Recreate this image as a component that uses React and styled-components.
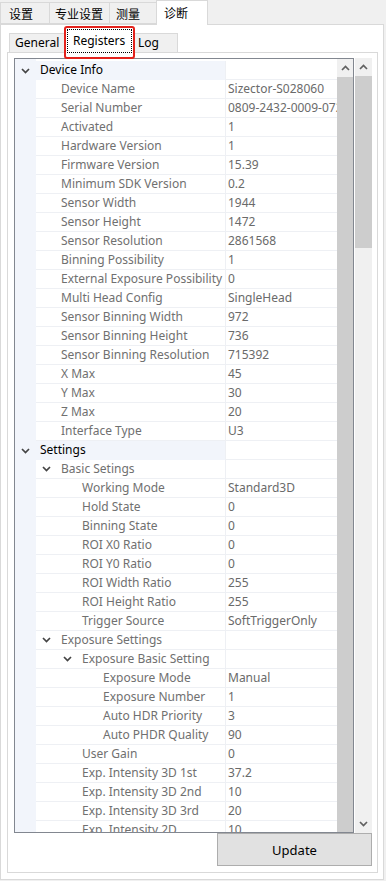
import React from 'react'
import styled, { createGlobalStyle } from 'styled-components'

const GlobalStyle = createGlobalStyle`
  html, body {
    margin: 0;
    padding: 0;
    background: #f0f0f0;
  }
  body {
    font-family: "Noto Sans", "Noto Sans CJK SC", sans-serif;
    font-size: 12px;
    color: #000;
  }
`

const Window = styled.div`
  width: 386px;
  height: 881px;
  display: flex;
  flex-direction: column;
  overflow: hidden;
`

const TabStrip = styled.div`
  display: flex;
  align-items: flex-end;
  height: 24px;
  flex: none;
  position: relative;
  z-index: 1;
`

const OuterTab = styled.div`
  box-sizing: border-box;
  width: ${p => p.w}px;
  height: ${p => (p.active ? 25 : 22)}px;
  margin-left: ${p => (p.first ? 0 : -1)}px;
  margin-bottom: ${p => (p.active ? -1 : 0)}px;
  padding-left: ${p => p.pl}px;
  padding-top: ${p => (p.active ? 3 : 2)}px;
  background: ${p => (p.active ? '#fff' : '#f0f0f0')};
  border: 1px solid #d9d9d9;
  border-bottom: ${p => (p.active ? 'none' : '1px solid #d9d9d9')};
  font-family: "Noto Sans CJK SC", sans-serif;
  font-size: 12px;
  line-height: 17px;
  position: relative;
  z-index: ${p => (p.active ? 2 : 1)};
`

const OuterPanel = styled.div`
  flex: 1;
  margin: 0 2px 1px 0;
  border: 1px solid #d9d9d9;
  background: #fff;
  display: flex;
  flex-direction: column;
  padding: 2px 5px 6px 6px;
  min-height: 0;
`

const InnerStrip = styled.div`
  display: flex;
  align-items: flex-end;
  height: 25px;
  margin-left: 2px;
  flex: none;
  position: relative;
  z-index: 1;
`

const InnerTab = styled.div`
  box-sizing: border-box;
  width: ${p => p.w}px;
  height: ${p => (p.active ? 26 : 19)}px;
  margin-left: ${p => (p.first ? 0 : -1)}px;
  margin-bottom: ${p => (p.active ? -1 : 0)}px;
  padding: ${p => (p.active ? '1px 1px 0' : `0 0 0 ${p.pl}px`)};
  background: ${p => (p.active ? '#fff' : '#f0f0f0')};
  border: 1px solid #d9d9d9;
  border-bottom: none;
  font-size: 12px;
  line-height: 18px;
  display: flex;
  position: relative;
  z-index: ${p => (p.active ? 2 : 1)};
`

const FocusLabel = styled.span`
  flex: 1;
  border: 1px dotted #000;
  padding-left: 5px;
  line-height: 22px;
`

const Highlight = styled.div`
  position: absolute;
  top: -2px;
  left: -2px;
  right: -2px;
  bottom: -6px;
  border: 2px solid #e3221c;
  border-radius: 3px;
  pointer-events: none;
`

const InnerPanel = styled.div`
  flex: 1;
  min-height: 0;
  border: 1px solid #d9d9d9;
  background: #fff;
  display: flex;
  flex-direction: column;
  padding: 5px 5px 6px 6px;
`

const Body = styled.div`
  flex: 1;
  min-height: 0;
  display: flex;
  gap: 1px;
`

const Tree = styled.div`
  flex: 1;
  border: 1px solid #828790;
  display: flex;
  overflow: hidden;
`

const Rows = styled.div`
  flex: 1;
  overflow: hidden;
  padding-top: 2px;
  background: linear-gradient(to right, #f2f5fb 21px, #fff 21px);
`

const Row = styled.div`
  display: flex;
  height: 19px;
`

const Gutter = styled.div`
  width: 21px;
  flex: none;
  display: flex;
  align-items: center;
  justify-content: center;
`

const NameCell = styled.div`
  width: 189px;
  flex: none;
  box-sizing: border-box;
  display: flex;
  align-items: center;
  padding-left: ${p => p.indent}px;
  border-bottom: 1px solid ${p => (p.top ? '#f2f5fb' : '#eef0f4')};
  background: ${p => (p.top ? '#f2f5fb' : 'transparent')};
  color: ${p => (p.top ? '#000' : '#707070')};
  white-space: nowrap;
  overflow: hidden;
`

const Expander = styled.span`
  width: 21px;
  flex: none;
  display: flex;
  align-items: center;
  justify-content: center;
`

const Label = styled.span`
  padding-left: 4px;
  line-height: 18px;
`

const ValueCell = styled.div`
  flex: 1;
  min-width: 0;
  box-sizing: border-box;
  border-left: 1px solid #eef0f4;
  border-bottom: 1px solid #eef0f4;
  padding-left: 2px;
  line-height: 18px;
  color: #6a6a6a;
  white-space: nowrap;
  overflow: hidden;
`

const VScroll = styled.div`
  width: ${p => p.w}px;
  flex: none;
  display: flex;
  flex-direction: column;
  background: #f0f0f0;
`

const Arrow = styled.div`
  height: 18px;
  flex: none;
  display: flex;
  align-items: center;
  justify-content: center;
`

const Thumb = styled.div`
  background: #cdcdcd;
  ${p => (p.h ? `height: ${p.h}px; flex: none;` : 'flex: 1;')}
`

const Track = styled.div`
  flex: 1;
`

const Footer = styled.div`
  display: flex;
  justify-content: flex-end;
  flex: none;
`

const Button = styled.button`
  width: 155px;
  height: 33px;
  background: #e1e1e1;
  border: 1px solid #adadad;
  font-family: "Noto Sans", sans-serif;
  font-size: 13px;
  font-weight: 400;
  color: #000;
  padding: 0;
`

const Chevron = ({ up, color = '#505050' }) => (
  <svg width="9" height="6" viewBox="0 0 9 6">
    <polyline
      points={up ? '1,5 4.5,1.5 8,5' : '1,1 4.5,4.5 8,1'}
      fill="none"
      stroke={color}
      strokeWidth="1.7"
    />
  </svg>
)

const tree = [
  {
    name: 'Device Info',
    children: [
      ['Device Name', 'Sizector-S028060'],
      ['Serial Number', '0809-2432-0009-0727'],
      ['Activated', '1'],
      ['Hardware Version', '1'],
      ['Firmware Version', '15.39'],
      ['Minimum SDK Version', '0.2'],
      ['Sensor Width', '1944'],
      ['Sensor Height', '1472'],
      ['Sensor Resolution', '2861568'],
      ['Binning Possibility', '1'],
      ['External Exposure Possibility', '0'],
      ['Multi Head Config', 'SingleHead'],
      ['Sensor Binning Width', '972'],
      ['Sensor Binning Height', '736'],
      ['Sensor Binning Resolution', '715392'],
      ['X Max', '45'],
      ['Y Max', '30'],
      ['Z Max', '20'],
      ['Interface Type', 'U3'],
    ],
  },
  {
    name: 'Settings',
    children: [
      {
        name: 'Basic Setings',
        children: [
          ['Working Mode', 'Standard3D'],
          ['Hold State', '0'],
          ['Binning State', '0'],
          ['ROI X0 Ratio', '0'],
          ['ROI Y0 Ratio', '0'],
          ['ROI Width Ratio', '255'],
          ['ROI Height Ratio', '255'],
          ['Trigger Source', 'SoftTriggerOnly'],
        ],
      },
      {
        name: 'Exposure Settings',
        children: [
          {
            name: 'Exposure Basic Setting',
            children: [
              ['Exposure Mode', 'Manual'],
              ['Exposure Number', '1'],
              ['Auto HDR Priority', '3'],
              ['Auto PHDR Quality', '90'],
            ],
          },
          ['User Gain', '0'],
          ['Exp. Intensity 3D 1st', '37.2'],
          ['Exp. Intensity 3D 2nd', '10'],
          ['Exp. Intensity 3D 3rd', '20'],
          ['Exp. Intensity 2D', '10'],
        ],
      },
    ],
  },
]

// flatten the tree into rows with their depth
function flatten(nodes, depth, out) {
  nodes.forEach(n => {
    if (Array.isArray(n)) {
      out.push({ depth, name: n[0], value: n[1] })
    } else {
      out.push({ depth, name: n.name, group: true })
      flatten(n.children, depth + 1, out)
    }
  })
  return out
}

const rows = flatten(tree, 0, [])

function TreeRow({ row }) {
  const top = row.group && row.depth === 0
  const sub = row.group && row.depth > 0
  return (
    <Row>
      <Gutter>{top && <Chevron color="#444" />}</Gutter>
      <NameCell top={top} indent={sub ? 21 * (row.depth - 1) : 21 * row.depth}>
        {sub && (
          <Expander>
            <Chevron color="#444" />
          </Expander>
        )}
        <Label>{row.name}</Label>
      </NameCell>
      <ValueCell>{row.value}</ValueCell>
    </Row>
  )
}

export default function App() {
  return (
    <Window>
      <GlobalStyle />
      <TabStrip>
        <OuterTab first w={50} pl={8}>设置</OuterTab>
        <OuterTab w={61} pl={5}>专业设置</OuterTab>
        <OuterTab w={48} pl={6}>测量</OuterTab>
        <OuterTab active w={52} pl={7}>诊断</OuterTab>
      </TabStrip>
      <OuterPanel>
        <InnerStrip>
          <InnerTab first w={57} pl={5}>General</InnerTab>
          <InnerTab active w={69}>
            <FocusLabel>Registers</FocusLabel>
            <Highlight />
          </InnerTab>
          <InnerTab w={45} pl={4}>Log</InnerTab>
        </InnerStrip>
        <InnerPanel>
          <Body>
            <Tree>
              <Rows>
                {rows.map((r, i) => (
                  <TreeRow key={i} row={r} />
                ))}
              </Rows>
              <VScroll w={16}>
                <Arrow>
                  <Chevron up color="#606060" />
                </Arrow>
                <Thumb />
              </VScroll>
            </Tree>
            <VScroll w={17}>
              <Arrow>
                <Chevron up color="#606060" />
              </Arrow>
              <Thumb h={172} />
              <Track />
              <Arrow>
                <Chevron color="#606060" />
              </Arrow>
            </VScroll>
          </Body>
          <Footer>
            <Button>Update</Button>
          </Footer>
        </InnerPanel>
      </OuterPanel>
    </Window>
  )
}
